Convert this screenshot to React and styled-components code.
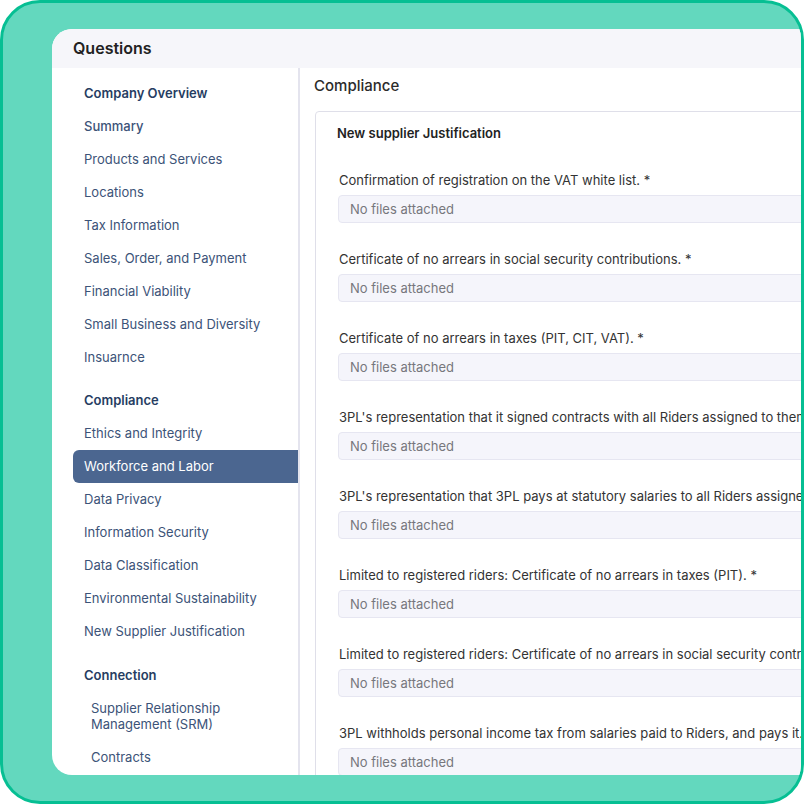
import React from 'react';
import styled, { createGlobalStyle } from 'styled-components';

const GlobalStyle = createGlobalStyle`
    *{
        box-sizing: border-box;
    }
    body{
        margin: 0;
        font-family: Inter, "Noto Sans", sans-serif;
        background: #ffffff;
    }
`

const Frame = styled.div`
    width: 804px;
    height: 804px;
    border: 3px solid #06bf93;
    border-radius: 40px;
    background-color: #63d8be;
    overflow: hidden;
    padding: 26px 0 26px 49px;
`

const Panel = styled.section`
    height: 100%;
    background-color: white;
    border-radius: 20px 0 0 20px;
    display: flex;
    flex-direction: column;
    overflow: hidden;
`

const TopBar = styled.header`
    height: 39px;
    flex-shrink: 0;
    background-color: #f6f6fa;
    padding: 0 0 2px 21px;
    display: flex;
    align-items: center;
    font-size: 16px;
    font-weight: 600;
    color: #222;
`

const Body = styled.div`
    flex: 1;
    display: flex;
    min-height: 0;
`

const Sidebar = styled.nav`
    width: 246px;
    flex-shrink: 0;
    padding: 8px 0 0 21px;
`

const Group = styled.div`
    & + &{
        margin-top: 10.5px;
    }
`

const Item = styled.div`
    padding: 8.5px 8px 8.5px ${(p) => (p.$indent ? 18 : 11)}px;
    font-size: 13px;
    line-height: 16px;
    font-weight: ${(p) => (p.$heading ? 600 : p.$medium ? 500 : 400)};
    color: ${(p) => (p.$active ? 'white' : p.$heading ? '#263d62' : '#3c5378')};
    background-color: ${(p) => (p.$active ? '#4b6690' : 'transparent')};
    border-radius: 6px 0 0 6px;
`

const Main = styled.main`
    flex: 1;
    min-width: 0;
    overflow: hidden;
    border-left: 2px solid #e4e4ee;
    padding: 9px 0 0 14px;
`

const MainTitle = styled.h2`
    margin: 0 0 16px;
    font-size: 15px;
    line-height: 18px;
    font-weight: 500;
    color: #2b2b2b;
`

const Card = styled.div`
    width: 640px;
    margin-left: 1px;
    border: 1px solid #dfdfe9;
    border-radius: 4px;
    padding: 13px 0 0 21px;
`

const CardTitle = styled.h3`
    margin: 0 0 31px;
    font-size: 13px;
    line-height: 16px;
    font-weight: 600;
    color: #222;
`

const Question = styled.div`
    margin-bottom: 28px;
    padding-left: 1px;
`

const Label = styled.div`
    padding-left: 1px;
    font-size: 13px;
    line-height: 16px;
    color: #333;
    white-space: nowrap;
    margin-bottom: 7px;
`

const FileBox = styled.div`
    height: 28px;
    display: flex;
    align-items: center;
    padding-left: 11px;
    background-color: #f5f5fb;
    border: 1px solid #e6e6f1;
    border-radius: 4px;
    font-size: 13px;
    color: #77777d;
`

const groups = [
    {
        title: 'Company Overview',
        items: ['Summary', 'Products and Services', 'Locations', 'Tax Information', 'Sales, Order, and Payment', 'Financial Viability', 'Small Business and Diversity', 'Insuarnce'],
    },
    {
        title: 'Compliance',
        items: ['Ethics and Integrity', 'Workforce and Labor', 'Data Privacy', 'Information Security', 'Data Classification', 'Environmental Sustainability', 'New Supplier Justification'],
    },
    {
        title: 'Connection',
        indent: true,
        items: [['Supplier Relationship', 'Management (SRM)'], 'Contracts'],
    },
]

const questions = [
    'Confirmation of registration on the VAT white list. *',
    'Certificate of no arrears in social security contributions. *',
    'Certificate of no arrears in taxes (PIT, CIT, VAT). *',
    "3PL's representation that it signed contracts with all Riders assigned to them. *",
    "3PL's representation that 3PL pays at statutory salaries to all Riders assigned. *",
    'Limited to registered riders: Certificate of no arrears in taxes (PIT). *',
    'Limited to registered riders: Certificate of no arrears in social security contributions. *',
    '3PL withholds personal income tax from salaries paid to Riders, and pays it. *',
]

function App() {
    return (
        <>
            <GlobalStyle />
            <Frame>
                <Panel>
                    <TopBar>Questions</TopBar>
                    <Body>
                        <Sidebar>
                            {groups.map((g) => (
                                <Group key={g.title}>
                                    <Item $heading>{g.title}</Item>
                                    {g.items.map((it) => {
                                        const key = Array.isArray(it) ? it.join(' ') : it;
                                        return (
                                            <Item
                                                key={key}
                                                $indent={g.indent}
                                                $medium={it === 'Summary'}
                                                $active={it === 'Workforce and Labor'}
                                            >
                                                {Array.isArray(it) ? it.map((line) => <div key={line}>{line}</div>) : it}
                                            </Item>
                                        );
                                    })}
                                </Group>
                            ))}
                        </Sidebar>
                        <Main>
                            <MainTitle>Compliance</MainTitle>
                            <Card>
                                <CardTitle>New supplier Justification</CardTitle>
                                {questions.map((q) => (
                                    <Question key={q}>
                                        <Label>{q}</Label>
                                        <FileBox>No files attached</FileBox>
                                    </Question>
                                ))}
                            </Card>
                        </Main>
                    </Body>
                </Panel>
            </Frame>
        </>
    );
}

export default App;
